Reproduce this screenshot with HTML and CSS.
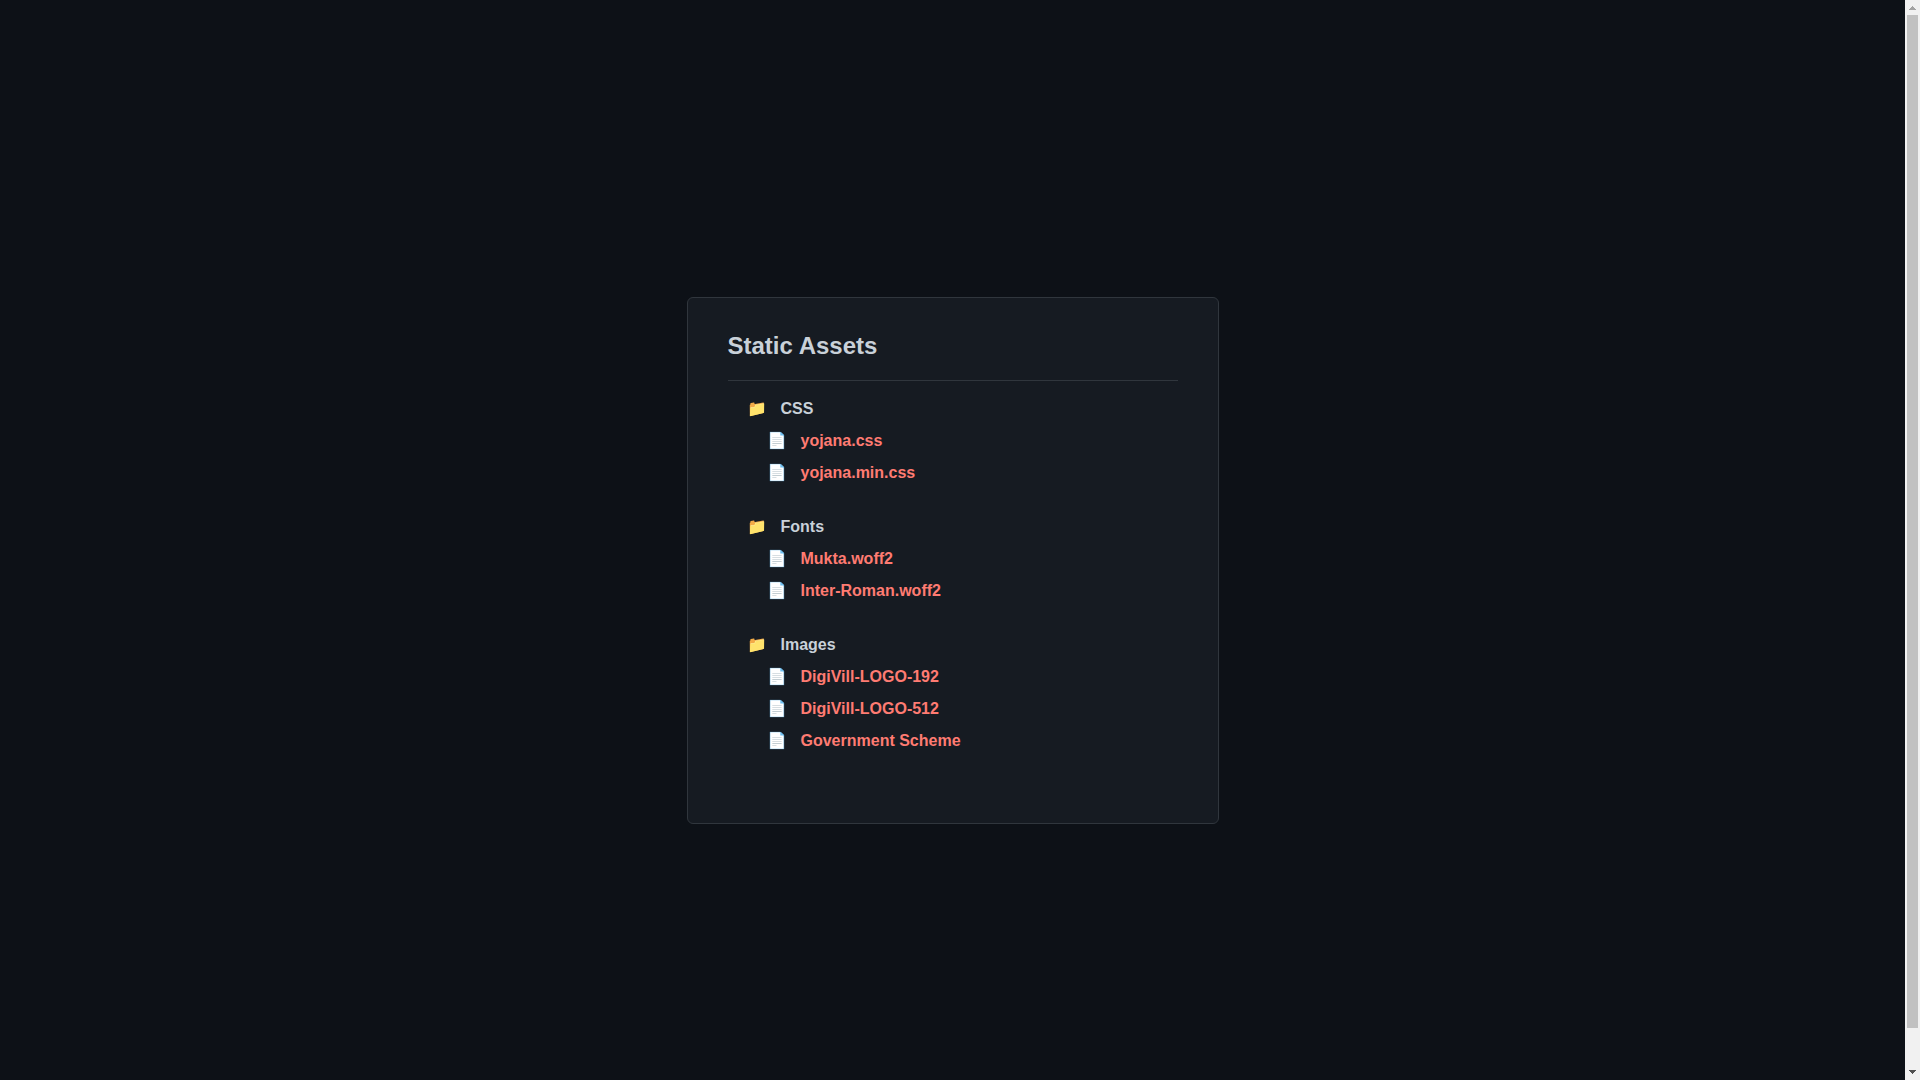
FILE: index.html
```html
<!DOCTYPE html>
<html lang="en">
<head>
<meta charset="utf-8">
<meta name="viewport" content="width=device-width, initial-scale=1">
<title>Static Assets</title>
<link rel="stylesheet" href="styles.css">
</head>
<body>
<main class="card">
  <h1 class="title">Static Assets</h1>
  <ul class="tree">
    <li class="folder">CSS
      <ul class="files">
        <li class="file"><a href="#yojana">yojana.css</a></li>
        <li class="file"><a href="#yojana-min">yojana.min.css</a></li>
      </ul>
    </li>
    <li class="folder">Fonts
      <ul class="files">
        <li class="file"><a href="#mukta">Mukta.woff2</a></li>
        <li class="file"><a href="#inter">Inter-Roman.woff2</a></li>
      </ul>
    </li>
    <li class="folder">Images
      <ul class="files">
        <li class="file"><a href="#logo-192">DigiVill-LOGO-192</a></li>
        <li class="file"><a href="#logo-512">DigiVill-LOGO-512</a></li>
        <li class="file"><a href="#scheme">Government Scheme</a></li>
      </ul>
    </li>
  </ul>
</main>
<div class="scrollbar" aria-hidden="true">
  <svg class="arrow arrow-up" viewBox="0 0 15 15"><path d="M7 6h1v1h1v1h1v1h1v1H4V9h1V8h1V7h1z"/></svg>
  <div class="thumb"></div>
  <div class="rest"></div>
  <svg class="arrow arrow-down" viewBox="0 0 15 15"><path d="M4 5h7v1h-1v1H9v1H8v1H7V8H6V7H5V6H4z"/></svg>
</div>
</body>
</html>
```
FILE: styles.css
```css
* { box-sizing: border-box; }

html { scrollbar-width: none; }

body {
  margin: 0;
  padding: 20px 35px 20px 20px;
  min-height: calc(100vh + 40px);
  display: flex;
  justify-content: center;
  align-items: center;
  background: #0d1117;
  color: #c9d1d9;
  font-family: "Liberation Sans", Arial, sans-serif;
  font-size: 16px;
  line-height: 24px;
}

.card {
  width: 100%;
  max-width: 532px;
  padding: 30px 40px 40px;
  background: #161b22;
  border: 1px solid #30363d;
  border-radius: 6px;
}

.title {
  margin: 0 0 16px;
  padding-bottom: 16px;
  border-bottom: 1px solid #30363d;
  font-size: 24px;
  line-height: 36px;
}

.tree, .files {
  list-style: none;
  margin: 0;
}

.tree { padding: 0 0 0 19px; }

.files { padding: 0 0 0 20px; }

.folder {
  margin-bottom: 30px;
  font-weight: 700;
}

.folder::before,
.file::before {
  display: inline-block;
  width: 20px;
  margin-right: 14px;
  font-weight: 400;
}

.folder::before { content: "📁"; }

.file { margin-top: 8px; }

.file::before { content: "📄"; }

.file a { color: #ff7b72; text-decoration: none; }

/* Scrollbar laid over the right edge of the window */
.scrollbar {
  position: fixed;
  top: 0;
  right: 0;
  bottom: 0;
  width: 15px;
  display: flex;
  flex-direction: column;
  background: #f1f1f1;
}

.arrow {
  flex: none;
  width: 15px;
  height: 15px;
}

.arrow-up { fill: #a3a3a3; }
.arrow-down { fill: #505050; }

.thumb {
  flex: 27;
  margin: 0 2px;
  background: #c1c1c1;
}

.rest { flex: 1; }
```
